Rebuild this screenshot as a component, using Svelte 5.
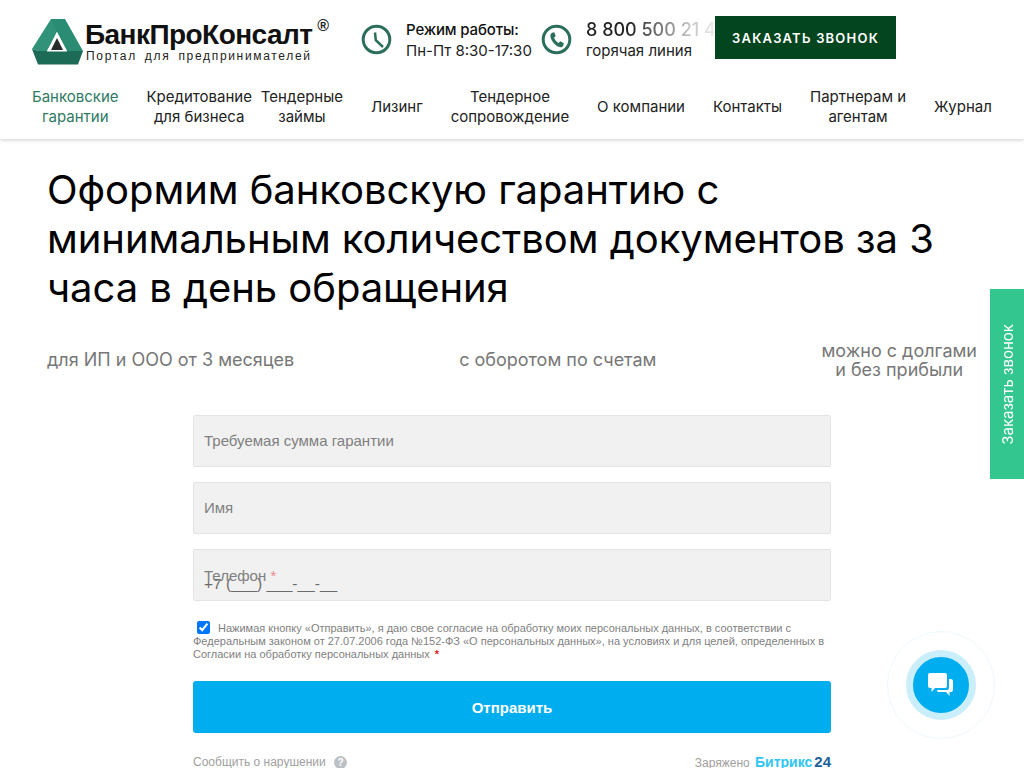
<script>
    const nav = [
        { text: ["Банковские", "гарантии"], active: true },
        { text: ["Кредитование", "для бизнеса"] },
        { text: ["Тендерные", "займы"] },
        { text: ["Лизинг"] },
        { text: ["Тендерное", "сопровождение"] },
        { text: ["О компании"] },
        { text: ["Контакты"] },
        { text: ["Партнерам и", "агентам"] },
        { text: ["Журнал"] },
    ];
    const perks = [
        ["для ИП и ООО от 3 месяцев"],
        ["с оборотом по счетам"],
        ["можно с долгами", "и без прибыли"],
    ];
</script>

<header class="header">
    <div class="top">
        <div class="logo">
            <svg class="logo-mark" width="52" height="46" viewBox="0 0 52 46">
                <path d="M0 30 L19 0 L33 0 L25 13 L15 32 L7 32Z" fill="#2f9279" />
                <path d="M19 0 H33 L51 32 H35 L25 13Z" fill="#2b8c74" />
                <path d="M0 30 L7 32 H51 L46 45.5 H6Z" fill="#1c6b57" />
                <path d="M25 13 L35 32.5 H15Z" fill="#fff" />
                <path d="M25 19 L31 31 H19Z" fill="#2a2a2a" />
            </svg>
            <div class="logo-text">
                <div class="logo-name">БанкПроКонсалт<sup class="reg">®</sup></div>
                <div class="logo-sub">Портал для предпринимателей</div>
            </div>
        </div>
        <div class="info hours">
            <svg class="round-icon" width="32" height="32" viewBox="0 0 32 32">
                <circle cx="15.5" cy="15.5" r="13.3" fill="none" stroke="#2c6e5c" stroke-width="3" />
                <path d="M14 8.5 L14.8 16.2 L22 23" fill="none" stroke="#2c6e5c" stroke-width="2.5" />
            </svg>
            <div class="info-text">
                <div class="info-title">Режим работы:</div>
                <div>Пн-Пт 8:30-17:30</div>
            </div>
        </div>
        <div class="info phone">
            <svg class="round-icon" width="32" height="32" viewBox="0 0 32 32">
                <circle cx="15.5" cy="15.5" r="13.3" fill="none" stroke="#2c6e5c" stroke-width="3" />
                <path d="M11 8.8 L13.3 8.3 L14.7 12.1 L13.1 13.7 C13.7 15.7 15.5 17.9 17.5 18.9 L19.3 17.3 L22.9 19.3 L22.1 21.9 C21.1 23.3 19.3 23.5 17.5 22.7 C13.5 20.9 10.5 16.9 9.5 13.3 C9.1 11.3 9.7 9.7 11 8.8Z" fill="#2c6e5c" />
            </svg>
            <div class="info-text">
                <div class="phone-num">8 800 500 21 43</div>
                <div>горячая линия</div>
            </div>
        </div>
        <button class="call-btn">ЗАКАЗАТЬ ЗВОНОК</button>
    </div>
    <nav class="nav">
        {#each nav as item}
            <a class="nav-item" class:active={item.active} href="#top">
                {#each item.text as line}<span>{line}</span>{/each}
            </a>
        {/each}
    </nav>
</header>

<main class="main">
    <h1 class="title">Оформим банковскую гарантию с минимальным количеством документов за 3 часа в день обращения</h1>
    <div class="perks">
        {#each perks as perk}
            <div class="perk">
                {#each perk as line}<span>{line}</span>{/each}
            </div>
        {/each}
    </div>
    <form class="form">
        <input class="field" placeholder="Требуемая сумма гарантии" />
        <input class="field" placeholder="Имя" />
        <div class="phone-field">
            <input class="field tel" value="+7 (___) ___-__-__" />
            <span class="float-label">Телефон <i>*</i></span>
        </div>
        <div class="consent">
            <input class="check" type="checkbox" checked />
            Нажимая кнопку «Отправить», я даю свое согласие на обработку моих персональных данных, в соответствии с Федеральным законом от 27.07.2006 года №152-ФЗ «О персональных данных», на условиях и для целей, определенных в Согласии на обработку персональных данных <b>*</b>
        </div>
        <button class="send" type="button">Отправить</button>
        <div class="form-foot">
            <span class="report">Сообщить о нарушении <em>?</em></span>
            <span class="charged">Заряжено <b>Битрикс<u>24</u></b></span>
        </div>
    </form>
</main>

<div class="side-tab"><span>Заказать звонок</span></div>

<div class="chat">
    <div class="chat-core">
        <svg width="26" height="25" viewBox="0 0 26 25">
            <path d="M2 0 H17 Q19 0 19 2 V13 Q19 15 17 15 H7 L3.5 19 V15 H2 Q0 15 0 13 V2 Q0 0 2 0Z" fill="#fff" />
            <path d="M21 6 H22 Q25 6 25 8 V17 Q25 19 23 19 H21.5 V23 L18 19 H10 Q9 19 9 17 H19 Q21 17 21 15Z" fill="#fff" />
        </svg>
    </div>
</div>

<style>
    :global(body) {
        font-family: Inter, "Liberation Sans", sans-serif;
        color: #000;
        height: 768px;
        overflow: hidden;
        position: relative;
    }
    .header {
        height: 139px;
        box-sizing: border-box;
        padding: 16px 32px 0;
        box-shadow: 0 1px 4px rgba(0, 0, 0, 0.2);
    }
    .top {
        display: flex;
        align-items: flex-start;
        height: 61px;
    }
    .logo {
        display: flex;
        width: 329px;
        flex: none;
        margin-top: 3px;
    }
    .logo-mark {
        flex: none;
        margin-right: 1px;
    }
    .logo-name {
        font-family: "Liberation Sans", sans-serif;
        font-weight: 700;
        font-size: 28px;
        line-height: 30px;
        letter-spacing: -0.55px;
        color: #111;
        white-space: nowrap;
        margin-top: 1px;
    }
    .reg {
        font-size: 16px;
        font-weight: 700;
        line-height: 0;
        vertical-align: 13px;
        margin-left: 5px;
        color: #222;
    }
    .logo-sub {
        font-family: "Liberation Sans", sans-serif;
        font-size: 12px;
        line-height: 13px;
        letter-spacing: 1.68px;
        word-spacing: 3px;
        color: #222;
        white-space: nowrap;
        margin-left: 1px;
    }
    .info {
        display: flex;
        align-items: center;
        margin-top: 3px;
        font-size: 15px;
        line-height: 21px;
        color: #222;
    }
    .hours {
        width: 180px;
        flex: none;
    }
    .phone {
        width: 174px;
        flex: none;
        overflow: hidden;
    }
    .round-icon {
        flex: none;
        margin-right: 13px;
    }
    .info-title {
        font-weight: 500;
        letter-spacing: -0.15px;
        color: #111;
    }
    .phone-num {
        font-size: 18px;
        font-weight: 500;
        white-space: nowrap;
        background: linear-gradient(90deg, #222 40px, #333 50px, #bbb 100px, #eee 130px);
        -webkit-background-clip: text;
        background-clip: text;
        color: transparent;
    }
    .call-btn {
        width: 181px;
        height: 43px;
        flex: none;
        border: 0;
        background: #03451f;
        color: #fff;
        font-family: inherit;
        font-weight: 600;
        font-size: 13px;
        letter-spacing: 1.2px;
    }
    .nav {
        display: flex;
        justify-content: space-between;
        align-items: center;
        height: 60px;
    }
    .nav-item {
        display: flex;
        flex-direction: column;
        align-items: center;
        font-size: 15px;
        line-height: 20px;
        color: #222;
        text-decoration: none;
    }
    .nav-item:nth-child(3) {
        margin-left: -19px;
    }
    .nav-item.active {
        color: #2f7a63;
    }
    .main {
        padding: 26px 47px 0;
    }
    .title {
        margin: 0;
        font-weight: 400;
        font-size: 40px;
        line-height: 49px;
        letter-spacing: -0.06px;
        color: #000;
    }
    .perks {
        display: flex;
        justify-content: space-between;
        align-items: flex-start;
        margin-top: 28px;
        height: 40px;
        font-size: 18px;
        line-height: 19px;
        color: #777;
    }
    .perk {
        display: flex;
        flex-direction: column;
        align-items: center;
        padding-top: 10px;
    }
    .perk:last-child {
        padding-top: 1px;
    }
    .form {
        width: 638px;
        margin: 35px auto 0;
        display: flex;
        flex-direction: column;
        gap: 15px;
        font-family: "Liberation Sans", Arial, sans-serif;
    }
    .field {
        display: block;
        width: 100%;
        height: 52px;
        box-sizing: border-box;
        padding: 0 10px 2px;
        border: 1px solid #e4e4e4;
        border-radius: 2px;
        background: #f1f1f1;
        font-family: inherit;
        font-size: 15px;
        color: #6b6b6b;
        outline: none;
    }
    .field::placeholder {
        color: #808080;
        opacity: 1;
    }
    .phone-field {
        position: relative;
    }
    .tel {
        padding-top: 20px;
        font-size: 15.5px;
    }
    .float-label {
        position: absolute;
        left: 11px;
        top: 18px;
        font-size: 15px;
        color: #808080;
    }
    .float-label i {
        font-style: normal;
        color: #f08a8a;
    }
    .consent {
        margin-top: 5px;
        font-size: 11px;
        line-height: 13px;
        color: #7f7f7f;
    }
    .consent b {
        color: #e02020;
        margin-left: 2px;
    }
    .check {
        width: 13px;
        height: 13px;
        margin: 0 5px 0 4px;
        vertical-align: -2px;
        accent-color: #0075ff;
    }
    .send {
        height: 52px;
        margin-top: 5px;
        border: 0;
        border-radius: 3px;
        background: #00aeef;
        color: #fff;
        font-family: inherit;
        font-size: 15px;
        font-weight: 700;
    }
    .form-foot {
        display: flex;
        justify-content: space-between;
        align-items: center;
        margin-top: 5px;
        font-size: 12px;
        color: #a0a0a0;
    }
    .report em {
        display: inline-block;
        width: 13px;
        height: 13px;
        margin-left: 5px;
        border-radius: 50%;
        background: #bcc1c6;
        color: #fff;
        font-size: 10px;
        line-height: 13px;
        font-style: normal;
        font-weight: 700;
        text-align: center;
    }
    .charged b {
        color: #2fc6f6;
        font-size: 14px;
        margin-left: 2px;
    }
    .charged u {
        color: #215f98;
        font-size: 15px;
        text-decoration: none;
        margin-left: 2px;
    }
    .side-tab {
        position: absolute;
        top: 289px;
        right: 0;
        width: 34px;
        height: 190px;
        display: flex;
        align-items: center;
        justify-content: center;
        background: #33c78f;
        color: #fff;
        font-size: 15px;
    }
    .side-tab span {
        writing-mode: vertical-rl;
        transform: rotate(180deg);
        white-space: nowrap;
    }
    .chat {
        position: absolute;
        left: 887px;
        top: 631px;
        width: 108px;
        height: 108px;
        box-sizing: border-box;
        border: 1px solid #eef9fe;
        border-radius: 50%;
        display: flex;
        align-items: center;
        justify-content: center;
    }
    .chat-core {
        width: 56px;
        height: 56px;
        border-radius: 50%;
        background: #00aeef;
        border: 7px solid #cbeefb;
        display: flex;
        align-items: center;
        justify-content: center;
    }
</style>
